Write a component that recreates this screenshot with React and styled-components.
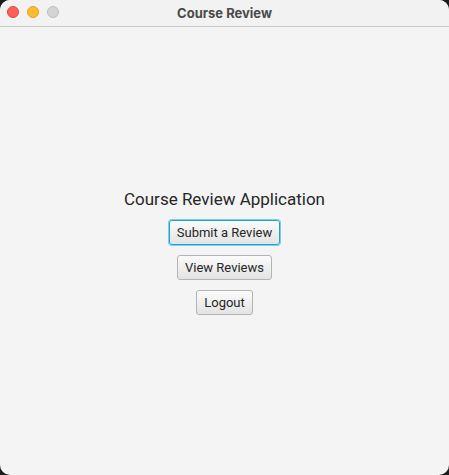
import React from "react"
import styled, { createGlobalStyle } from "styled-components"

const Global = createGlobalStyle`
  html, body {
    margin: 0;
    padding: 0;
    background: #1c1c1c;
  }
  #root {
    width: 449px;
    height: 475px;
  }
`

const Window = styled.div`
  width: 449px;
  height: 475px;
  background: #f4f4f4;
  border-radius: 10px;
  overflow: hidden;
  display: flex;
  flex-direction: column;
  font-family: Inter, "Liberation Sans", sans-serif;
`

const TitleBar = styled.div`
  position: relative;
  height: 26px;
  flex: none;
  background: #f2f2f2;
  border-bottom: 1px solid #cbcbcb;
  display: flex;
  align-items: center;
  justify-content: center;
`

const Lights = styled.div`
  position: absolute;
  left: 7px;
  top: 6px;
  display: flex;
  gap: 8px;
`

const Light = styled.span`
  width: 12px;
  height: 12px;
  border-radius: 50%;
  box-sizing: border-box;
  background: ${p => p.color};
  border: 1px solid ${p => p.edge};
`

const WindowTitle = styled.div`
  font-size: 13px;
  font-weight: 700;
  color: #4a4a4a;
`

const Content = styled.div`
  flex: 1;
  display: flex;
  flex-direction: column;
  align-items: center;
  justify-content: center;
  gap: 10px;
  font-family: Roboto, "Liberation Sans", sans-serif;
`

const Heading = styled.div`
  font-size: 17px;
  line-height: 22px;
  color: #262626;
`

const Button = styled.button`
  height: 25px;
  box-sizing: border-box;
  padding: 0 7px;
  font-family: inherit;
  font-size: 13px;
  color: #262626;
  background: linear-gradient(#fbfbfb, #e3e3e3);
  border: 1px solid ${p => (p.focused ? "#1fa3d6" : "#b4b4b4")};
  box-shadow: ${p => (p.focused ? "0 0 0 1px #7fcbe8" : "none")};
  border-radius: 3px;
  cursor: pointer;
`

const App = () => {
  return (
    <>
      <Global />
      <Window>
        <TitleBar>
          <Lights>
            <Light color="#fe5f57" edge="#e0443e" />
            <Light color="#febc2e" edge="#dea123" />
            <Light color="#d4d4d4" edge="#bdbdbd" />
          </Lights>
          <WindowTitle>Course Review</WindowTitle>
        </TitleBar>
        <Content>
          <Heading>Course Review Application</Heading>
          <Button focused>Submit a Review</Button>
          <Button>View Reviews</Button>
          <Button>Logout</Button>
        </Content>
      </Window>
    </>
  )
}

export default App
